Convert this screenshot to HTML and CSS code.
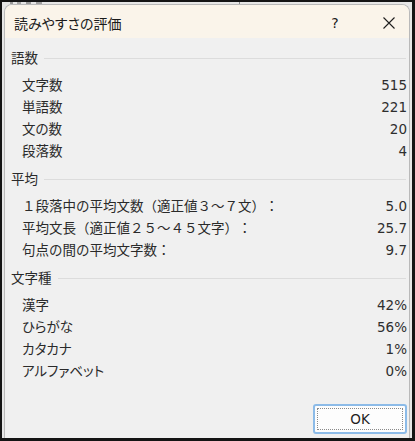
FILE: index.html
```html
<!DOCTYPE html>
<html lang="ja">
<head>
<meta charset="utf-8">
<title>読みやすさの評価</title>
<link rel="stylesheet" href="styles.css">
</head>
<body>
<div class="frame">
  <div class="desk">
    <div class="behind"></div>
    <div class="dialog">
      <div class="titlebar">
        <div class="title">読みやすさの評価</div>
        <div class="help">?</div>
        <div class="close">
          <svg width="12" height="12" viewBox="0 0 12 12"><path d="M0.5 0.5 L11.5 11.5 M11.5 0.5 L0.5 11.5" stroke="#1f1f1f" stroke-width="1.1" fill="none"/></svg>
        </div>
      </div>
      <div class="content">
        <div class="section">
          <div class="sec-head"><span class="sec-label">語数</span><span class="sec-line"></span></div>
          <div class="rows">
            <div class="row"><span class="lbl">文字数</span><span class="val">515</span></div>
            <div class="row"><span class="lbl">単語数</span><span class="val">221</span></div>
            <div class="row"><span class="lbl">文の数</span><span class="val">20</span></div>
            <div class="row"><span class="lbl">段落数</span><span class="val">4</span></div>
          </div>
        </div>
        <div class="section">
          <div class="sec-head"><span class="sec-label">平均</span><span class="sec-line"></span></div>
          <div class="rows">
            <div class="row"><span class="lbl full">１段落中の平均文数（適正値３～７文）：</span><span class="val">5.0</span></div>
            <div class="row"><span class="lbl full">平均文長（適正値２５～４５文字）：</span><span class="val">25.7</span></div>
            <div class="row"><span class="lbl full">句点の間の平均文字数：</span><span class="val">9.7</span></div>
          </div>
        </div>
        <div class="section">
          <div class="sec-head"><span class="sec-label">文字種</span><span class="sec-line"></span></div>
          <div class="rows">
            <div class="row"><span class="lbl">漢字</span><span class="val">42%</span></div>
            <div class="row"><span class="lbl">ひらがな</span><span class="val">56%</span></div>
            <div class="row"><span class="lbl">カタカナ</span><span class="val">1%</span></div>
            <div class="row"><span class="lbl">アルファベット</span><span class="val">0%</span></div>
          </div>
        </div>
        <div class="footer">
          <button class="ok"><span class="ok-focus">OK</span></button>
        </div>
      </div>
    </div>
  </div>
</div>
</body>
</html>
```
FILE: styles.css
```css
html, body {
  margin: 0;
  padding: 0;
}
body {
  width: 415px;
  height: 441px;
  background: #141414;
  overflow: hidden;
  font-family: "DejaVu Sans", "Noto Sans CJK JP", sans-serif;
  font-size: 13.5px;
  color: #2a2a2a;
}
.frame {
  padding: 2px 3px 3px 2px;
  height: 441px;
  box-sizing: border-box;
}
.desk {
  height: 436px;
  background: #e6e6e6;
  padding: 0 2px 0 2px;
  box-sizing: border-box;
  display: flex;
  flex-direction: column;
  overflow: hidden;
}
.behind {
  height: 2px;
  flex: none;
  background:
    linear-gradient(90deg, transparent 6px, #9a9a9a 6px, #9a9a9a 9px, transparent 9px,
      transparent 13px, #a5a5a5 13px, #a5a5a5 17px, transparent 17px,
      transparent 22px, #9a9a9a 22px, #9a9a9a 27px, transparent 27px,
      transparent 32px, #a0a0a0 32px, #a0a0a0 38px, transparent 38px,
      transparent 235px, #8a8a8a 235px, #8a8a8a 236px, transparent 236px);
}
.dialog {
  flex: 1;
  display: flex;
  flex-direction: column;
  border: 1px solid #b9b9b9;
  border-bottom: none;
  border-radius: 8px 8px 0 0;
  background: #f0f0f0;
  overflow: hidden;
}
.titlebar {
  height: 33px;
  flex: none;
  background: #faf4ea;
  display: flex;
  align-items: center;
  padding: 2px 0 0 9px;
  box-sizing: border-box;
}
.title {
  flex: 1;
  font-size: 14px;
  font-feature-settings: "palt";
  color: #1a1a1a;
}
.help {
  width: 14px;
  text-align: center;
  font-size: 14px;
  color: #1a1a1a;
  margin-right: 41px;
}
.close {
  width: 12px;
  height: 12px;
  margin-right: 14px;
  display: flex;
}
.content {
  flex: 1;
  display: flex;
  flex-direction: column;
  padding: 9px 2px 0 6px;
}
.section {
  display: flex;
  flex-direction: column;
  margin-bottom: 6px;
}
.sec-head {
  height: 22px;
  display: flex;
  align-items: center;
  margin-bottom: 5px;
}
.sec-label {
  font-feature-settings: "palt";
  color: #2a2a2a;
  margin-right: 6px;
  line-height: 22px;
}
.sec-line {
  flex: 1;
  height: 1px;
  background: #dcdcdc;
  margin-right: 1px;
}
.rows {
  display: flex;
  flex-direction: column;
  padding-left: 11px;
}
.row {
  height: 22px;
  line-height: 22px;
  display: flex;
  justify-content: space-between;
  align-items: center;
}
.lbl {
  font-feature-settings: "palt";
}
.lbl.full {
  font-feature-settings: normal;
  text-spacing-trim: space-all;
}
.val {
  color: #2e2e2e;
}
.footer {
  display: flex;
  justify-content: flex-end;
  margin-top: auto;
  padding-bottom: 4px;
}
.ok {
  width: 94px;
  height: 30px;
  border: 2px solid #8cbbe8;
  border-radius: 3px;
  background: #fdfdfd;
  padding: 2px;
  margin: 0;
  box-sizing: border-box;
  font-family: "DejaVu Sans", sans-serif;
  font-size: 13.5px;
  color: #1f1f1f;
  display: flex;
}
.ok-focus {
  flex: 1;
  border: 1px dotted #8a8a8a;
  display: flex;
  align-items: center;
  justify-content: center;
}
```
